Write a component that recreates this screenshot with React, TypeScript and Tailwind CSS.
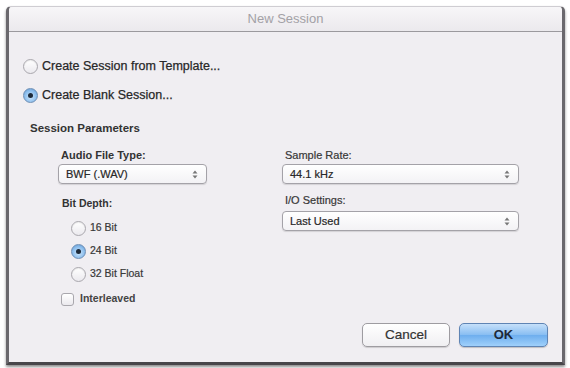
import React from "react";

const font = { fontFamily: '"Liberation Sans", Arial, sans-serif' };

function Radio({ checked }: { checked?: boolean }) {
  return checked ? (
    <span className="relative flex h-[15px] w-[15px] shrink-0 items-center justify-center rounded-full border border-[#6f8fb5] bg-[radial-gradient(circle_at_50%_60%,#cfe6fb_0%,#8fc0ee_55%,#5b93cf_100%)]">
      <span className="h-[5px] w-[5px] rounded-full bg-[#1d2a3a]" />
    </span>
  ) : (
    <span className="h-[15px] w-[15px] shrink-0 rounded-full border border-[#a9a7ad] bg-[linear-gradient(#ffffff,#ebe9ee)] shadow-[inset_0_1px_1px_rgba(0,0,0,0.08)]" />
  );
}

function Arrows() {
  return (
    <svg width="6" height="9" viewBox="0 0 6 9" className="shrink-0">
      <path d="M3 0.5 L5.5 3.5 L0.5 3.5 Z" fill="#777" />
      <path d="M3 8.5 L5.5 5.5 L0.5 5.5 Z" fill="#777" />
    </svg>
  );
}

function Select({ value, w }: { value: string; w: string }) {
  return (
    <div
      className={`flex h-[20px] ${w} items-center justify-between rounded-[4px] border border-[#a4a2a8] bg-[linear-gradient(#ffffff,#f3f2f5)] pl-[7px] pr-[8px] text-[11px] text-[#222] shadow-[0_1px_1px_rgba(0,0,0,0.12)] [-webkit-text-stroke:0.2px_#333]`}
    >
      <span>{value}</span>
      <Arrows />
    </div>
  );
}

export default function App() {
  return (
    <div className="h-[368px] w-[570px] bg-white pl-[6px] pt-[6px]" style={font}>
      <div className="flex h-[359px] w-[559px] flex-col rounded-t-[5px] border-x-[3px] border-b-[3px] border-t border-x-[#6a686d] border-b-[#48464a] border-t-[#cfcdd2] bg-[#f0eef2] shadow-[0_2px_3px_rgba(0,0,0,0.45)]">
        <div className="flex h-[25px] shrink-0 items-center justify-center rounded-t-[4px] border-b border-[#9b999e] bg-[linear-gradient(#f7f6f8,#ebe9ed)] text-[13px] text-[#a3a1a6]">
          New Session
        </div>
        <div className="relative flex flex-1 flex-col pl-[14px] pt-[26px] text-[#222]">
          <div className="flex h-[16px] items-center gap-[4px] text-[12.5px] text-[#222] [-webkit-text-stroke:0.25px_#333]">
            <Radio />
            <span>Create Session from Template...</span>
          </div>
          <div className="mt-[13px] flex h-[16px] items-center gap-[4px] text-[12.5px] text-[#222] [-webkit-text-stroke:0.25px_#333]">
            <Radio checked />
            <span>Create Blank Session...</span>
          </div>
          <div className="ml-[7px] mt-[18px] text-[11.5px] font-bold leading-[14px] text-[#333]">Session Parameters</div>
          <div className="mt-[13px] flex">
            <div className="ml-[35px] flex w-[149px] flex-col">
              <div className="pl-[3px] text-[11px] font-bold leading-[14px] text-[#333]">Audio File Type:</div>
              <div className="mt-[2px]">
                <Select value="BWF (.WAV)" w="w-[149px]" />
              </div>
              <div className="mt-[12px] pl-[4px] text-[10.5px] font-bold leading-[14px] text-[#333]">Bit Depth:</div>
              <div className="ml-[13px] mt-[10px] flex flex-col gap-[7px] text-[10.5px] text-[#333] [-webkit-text-stroke:0.2px_#444]">
                <div className="flex h-[16px] items-center gap-[4px]">
                  <Radio />
                  <span>16 Bit</span>
                </div>
                <div className="flex h-[16px] items-center gap-[4px]">
                  <Radio checked />
                  <span>24 Bit</span>
                </div>
                <div className="flex h-[16px] items-center gap-[4px]">
                  <Radio />
                  <span>32 Bit Float</span>
                </div>
              </div>
              <div className="ml-[3px] mt-[10px] flex h-[14px] items-center gap-[6px] text-[10.5px] font-bold text-[#444]">
                <span className="h-[13px] w-[13px] shrink-0 rounded-[3px] border border-[#a9a7ad] bg-[linear-gradient(#ffffff,#ebe9ee)]" />
                <span>Interleaved</span>
              </div>
            </div>
            <div className="ml-[75px] flex w-[237px] flex-col">
              <div className="pl-[3px] text-[11px] leading-[14px] text-[#333] [-webkit-text-stroke:0.2px_#444]">Sample Rate:</div>
              <div className="mt-[2px]">
                <Select value="44.1 kHz" w="w-[237px]" />
              </div>
              <div className="mt-[9px] pl-[3px] text-[11px] leading-[14px] text-[#333] [-webkit-text-stroke:0.2px_#444]">I/O Settings:</div>
              <div className="mt-[4px]">
                <Select value="Last Used" w="w-[237px]" />
              </div>
            </div>
          </div>
          <div className="absolute bottom-[15px] right-[14px] flex gap-[9px]">
            <button className="flex h-[24px] w-[88px] items-center justify-center rounded-[5px] border border-[#9e9ca1] bg-[linear-gradient(#ffffff,#f0eff2)] text-[13.5px] text-[#333] shadow-[0_1px_1px_rgba(0,0,0,0.15)] [-webkit-text-stroke:0.2px_#333]">
              Cancel
            </button>
            <button className="flex h-[24px] w-[89px] items-center justify-center rounded-[5px] border border-[#5f84b4] bg-[linear-gradient(#c6e0fa,#87bdf2_50%,#6eaeee_51%,#9fd0fb)] text-[13px] font-bold text-[#1d2a3a] shadow-[0_1px_1px_rgba(0,0,0,0.2)]">
              OK
            </button>
          </div>
        </div>
      </div>
    </div>
  );
}
